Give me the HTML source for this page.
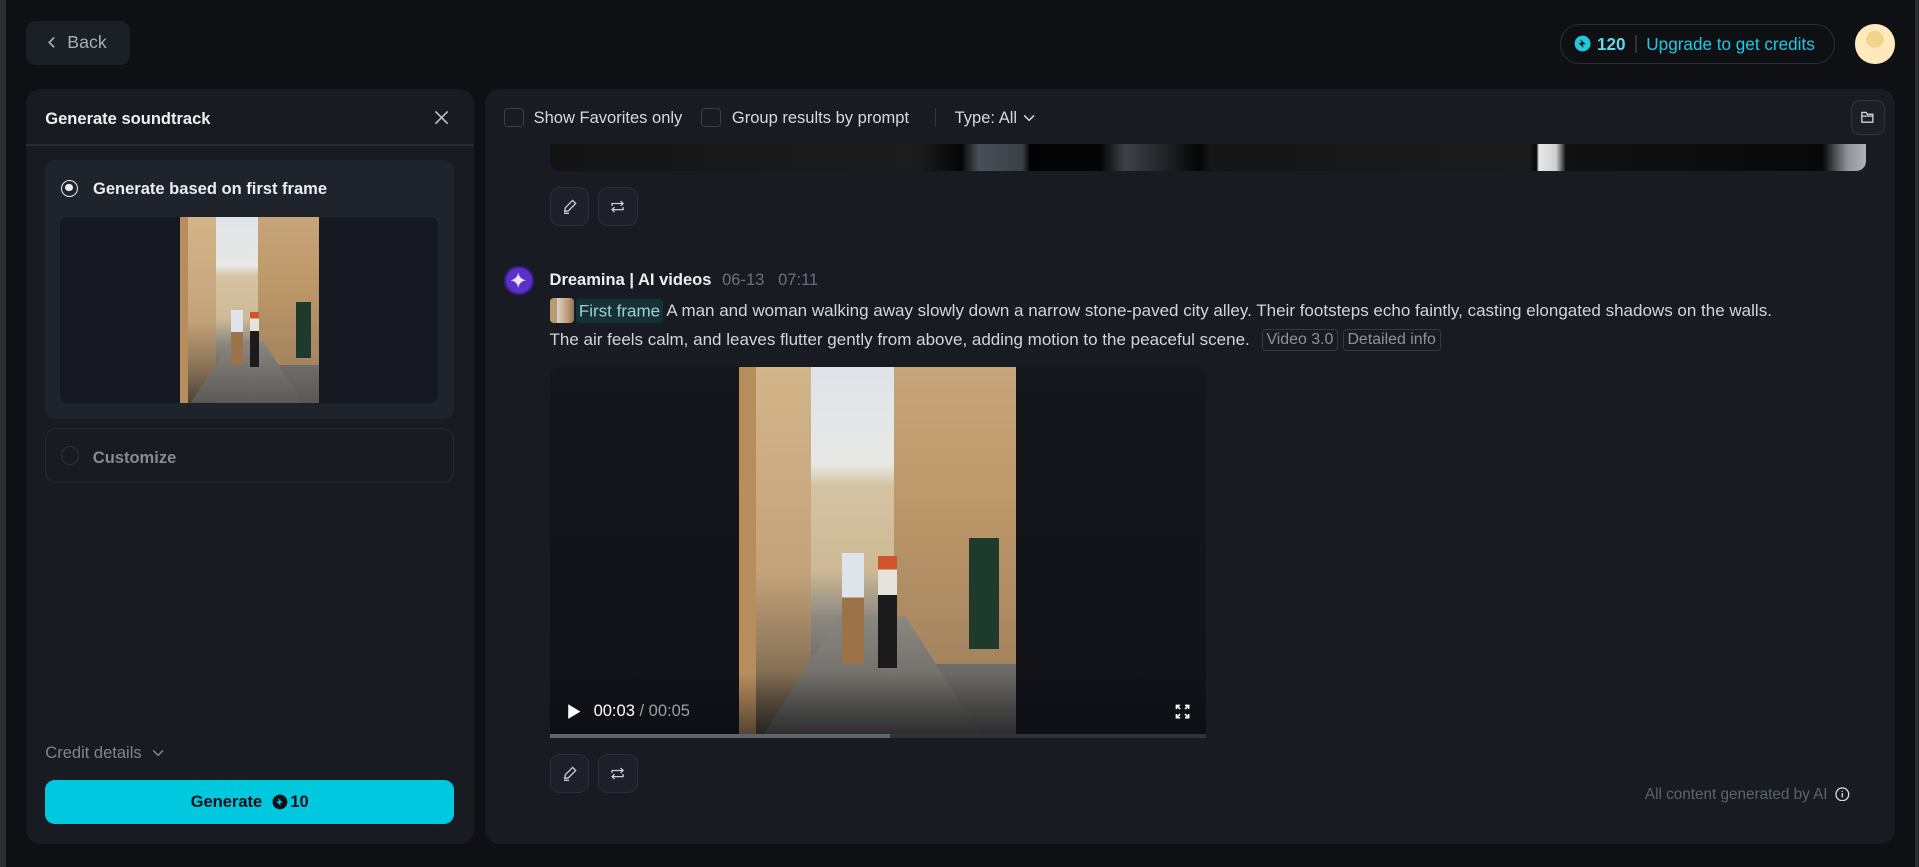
<!DOCTYPE html>
<html><head><meta charset="utf-8"><style>
*{box-sizing:border-box;margin:0;padding:0}
html,body{width:1919px;height:867px;overflow:hidden;background:#0f1013}
#root{zoom:1.2239;width:1568px;height:708px;position:relative;font-family:"Liberation Sans",sans-serif;background:#0f1013}
.abs{position:absolute}
.edgeL{left:0;top:0;width:5px;height:708px;background:#2e2e31}
.edgeR{right:0;top:0;width:3px;height:708px;background:#2e2e31}
.panel{background:#181b22;border-radius:12px}
.btn{position:absolute;width:32px;height:32px;border-radius:8px;background:#1d2028;border:1px solid #2a2e36;display:flex;align-items:center;justify-content:center}
.photo{position:absolute;overflow:hidden;background:linear-gradient(180deg,#dfe4e8 0%,#e8e9e6 26%,#d4c3a2 32%,#cdb995 55%,#8b8780 68%,#6f6c69 80%,#5a5855 100%)}
.photo .wl{position:absolute;left:0;top:0;width:26%;height:100%;background:linear-gradient(180deg,#d3b58a,#c4a37a 55%,#8a7458 80%,#4e4236)}
.photo .wl2{position:absolute;left:0;top:0;width:6%;height:100%;background:#b88d5e}
.photo .wr{position:absolute;right:0;top:0;width:44%;height:80%;background:linear-gradient(180deg,#c8a57a,#bb9668 50%,#a48460)}
.photo .road{position:absolute;left:8%;bottom:0;width:80%;height:33%;background:linear-gradient(180deg,#8b8780,#5c5a57);clip-path:polygon(35% 0,65% 0,100% 100%,0 100%)}
.photo .m{position:absolute;left:37%;top:50%;width:8%;height:30%;background:linear-gradient(180deg,#dfe3ea 40%,#9c7248 40%)}
.photo .w{position:absolute;left:50%;top:51%;width:7%;height:30%;background:linear-gradient(180deg,#d2542a 12%,#e6e2dc 12%,#e6e2dc 35%,#1b1b1b 35%)}
.photo .door{position:absolute;right:6%;top:46%;width:11%;height:30%;background:#1e3a2c}
</style></head><body><div id="root">
<div class="abs edgeL"></div><div class="abs edgeR"></div>

<div class="abs" style="left:21px;top:17px;width:85px;height:36px;border-radius:8px;background:#1b1f26;color:#a9aeb6;font-size:14.5px;display:flex;align-items:center;padding-left:16px">
<svg width="12" height="12" viewBox="0 0 12 12" style="margin-right:6px"><path d="M7.5 2L3.5 6l4 4" stroke="#a9aeb6" stroke-width="1.4" fill="none"/></svg>Back</div>

<div class="abs" style="left:1275px;top:20px;width:224px;height:32px;border:1px solid #2a2d33;border-radius:16px;display:flex;align-items:center;padding-left:10px;font-size:14px">
<svg width="14" height="14" viewBox="0 0 14 14"><circle cx="7" cy="7" r="6.5" fill="#22c7e0"/><path d="M5 3.5l4.5 4-2.5.3.8 2.7-4-3.8 2.3-.3z" fill="#0f1013"/></svg>
<span style="color:#5fd8ea;font-weight:bold;margin-left:5px">120</span>
<span style="width:1px;height:14px;background:#2e3238;margin:0 8px"></span>
<span style="color:#1ecbe6">Upgrade to get credits</span></div>
<div class="abs" style="left:1516px;top:20px;width:32px;height:32px;border-radius:50%;background:radial-gradient(circle at 50% 38%,#f3d48e 0 26%,#fde9bc 28%)"></div>

<!-- left panel -->
<div class="abs panel" style="left:21px;top:73px;width:366px;height:617px">
 <div class="abs" style="left:16px;top:16px;color:#eef0f3;font-size:13.5px;font-weight:bold">Generate soundtrack</div>
 <svg class="abs" style="left:333px;top:16px" width="14" height="14" viewBox="0 0 14 14"><path d="M2 2l10 10M12 2L2 12" stroke="#b8bcc4" stroke-width="1.4"/></svg>
 <div class="abs" style="left:0;top:45px;width:366px;height:1px;background:#272b33"></div>
 <div class="abs" style="left:16px;top:58px;width:334px;height:211px;border-radius:9px;background:#1f232b">
  <div class="abs" style="left:13px;top:16px;width:14px;height:14px;border-radius:50%;border:1.4px solid #e8eaee"><div style="width:6px;height:6px;border-radius:50%;background:#e8eaee;margin:2.6px"></div></div>
  <div class="abs" style="left:39px;top:15px;color:#eceef1;font-size:13.5px;font-weight:bold">Generate based on first frame</div>
  <div class="abs" style="left:12px;top:46px;width:309px;height:152px;border-radius:6px;background:#151820">
   <div class="photo" style="left:98px;top:0;width:114px;height:152px"><div class="wl"></div><div class="wl2"></div><div class="wr"></div><div class="road"></div><div class="door"></div><div class="m"></div><div class="w"></div></div>
  </div>
 </div>
 <div class="abs" style="left:16px;top:277px;width:334px;height:45px;border-radius:9px;border:1px solid #262a31">
  <div class="abs" style="left:12px;top:14px;width:15px;height:15px;border-radius:50%;border:1.4px solid #2e323a"></div>
  <div class="abs" style="left:38px;top:15px;color:#858a93;font-size:13.5px;font-weight:bold">Customize</div>
 </div>
 <div class="abs" style="left:16px;top:534px;color:#7f858e;font-size:13.5px">Credit details <svg width="10" height="8" viewBox="0 0 10 8" style="margin-left:5px"><path d="M1 2l4 4 4-4" stroke="#7f858e" stroke-width="1.2" fill="none"/></svg></div>
 <div class="abs" style="left:16px;top:564px;width:334px;height:36px;border-radius:8px;background:#00c8df;display:flex;align-items:center;justify-content:center;color:#0d1117;font-size:13.5px;font-weight:bold">Generate
  <svg width="13" height="13" viewBox="0 0 14 14" style="margin:0 2px 0 8px"><circle cx="7" cy="7" r="6.5" fill="#0d1117"/><path d="M5 3.5l4.5 4-2.5.3.8 2.7-4-3.8 2.3-.3z" fill="#00c8df"/></svg>10</div>
</div>

<!-- right panel -->
<div class="abs panel" style="left:396px;top:73px;width:1152px;height:617px;overflow:hidden">
 <div class="abs" style="left:16px;top:15px;width:16px;height:16px;border:1px solid #3a3e46;border-radius:3px"></div>
 <div class="abs" style="left:40px;top:15px;color:#d6d9de;font-size:13.5px">Show Favorites only</div>
 <div class="abs" style="left:177px;top:15px;width:16px;height:16px;border:1px solid #3a3e46;border-radius:3px"></div>
 <div class="abs" style="left:202px;top:15px;color:#d6d9de;font-size:13.5px">Group results by prompt</div>
 <div class="abs" style="left:368px;top:15px;width:1px;height:16px;background:#30343b"></div>
 <div class="abs" style="left:384px;top:15px;color:#d6d9de;font-size:13.5px">Type: All <svg width="10" height="8" viewBox="0 0 10 8" style="margin-left:1px"><path d="M1 2l4 4 4-4" stroke="#d6d9de" stroke-width="1.2" fill="none"/></svg></div>
 <div class="abs" style="left:1116px;top:9px;width:28px;height:28px;border-radius:7px;border:1px solid #30343c;background:#1c1f26;display:flex;align-items:center;justify-content:center"><svg width="12" height="12" viewBox="0 0 12 12"><path d="M1.5 2h3.5l1 1.5h4.5v6.5h-9z M1.5 5h9" stroke="#d0d3d8" stroke-width="1.1" fill="none"/></svg></div>
 <div class="abs" style="left:53px;top:45px;width:1076px;height:22px;border-radius:0 0 8px 8px;background:linear-gradient(90deg,#141414 0,#1c1c1c 300px,#050505 336px,#4a4f57 350px,#3b3f46 386px,#030303 392px,#050505 450px,#3e4248 470px,#1e2022 505px,#050505 530px,#151515 540px,#1b1b1b 800px,#060606 806px,#e8e8e8 808px,#cfcfcf 822px,#111 830px,#080808 1040px,#8e939a 1060px,#b0b4ba 1076px)"></div>
 <div class="btn" style="left:53px;top:80px"><svg width="14" height="14" viewBox="0 0 14 14"><path d="M3 11l.5-3 6-6 2.5 2.5-6 6zM2.5 12.5h4" stroke="#c9ccd2" stroke-width="1.1" fill="none"/></svg></div>
 <div class="btn" style="left:93px;top:80px"><svg width="14" height="14" viewBox="0 0 14 14"><path d="M2.5 6.5v-2h9M9.5 2.5l2 2-2 2M11.5 7.5v2h-9M4.5 11.5l-2-2 2-2" stroke="#c9ccd2" stroke-width="1.1" fill="none"/></svg></div>

 <div class="abs" style="left:16px;top:144px;width:24px;height:24px;border-radius:50%;background:#5a30c8;border:2px solid #3a1f86"><svg width="20" height="20" viewBox="0 0 20 20"><path d="M10 3.5Q10.8 9.2 16.5 10Q10.8 10.8 10 16.5Q9.2 10.8 3.5 10Q9.2 9.2 10 3.5z" fill="#e9e2ff"/></svg></div>
 <div class="abs" style="left:53px;top:148px;font-size:13.5px"><b style="color:#eceef1">Dreamina | AI videos</b> <span style="color:#6a707a;margin-left:5px">06-13&nbsp;&nbsp;&nbsp;07:11</span></div>
 <div class="abs" style="left:53px;top:170px;width:1100px;font-size:13.9px;color:#d2d5da;line-height:23px">
  <span style="display:inline-block;width:20px;height:20px;border-radius:3px;vertical-align:-5px;background:linear-gradient(90deg,#b89a72 30%,#d8d3c8 30%,#c5a07a 70%,#8a7560)"></span><span style="background:#163136;color:#9fd0d6;padding:2px 2px;border-radius:3px;margin-left:2px">First frame</span> A man and woman walking away slowly down a narrow stone-paved city alley. Their footsteps echo faintly, casting elongated shadows on the walls.<br>
  The air feels calm, and leaves flutter gently from above, adding motion to the peaceful scene. <span style="border:1px solid #353941;border-radius:3px;color:#8d929a;padding:1px 3px;margin-left:6px;font-size:13px">Video 3.0</span> <span style="border:1px solid #353941;border-radius:3px;color:#8d929a;padding:1px 3px;font-size:13px">Detailed info</span>
 </div>
 <div class="abs" style="left:53px;top:227px;width:536px;height:303px;border-radius:8px 8px 0 0;background:linear-gradient(180deg,#15171d,#101217);overflow:hidden">
  <div class="photo" style="left:155px;top:0;width:226px;height:303px"><div class="wl"></div><div class="wl2"></div><div class="wr"></div><div class="road"></div><div class="door"></div><div class="m"></div><div class="w"></div></div>
  <div class="abs" style="left:0;top:250px;width:536px;height:53px;background:linear-gradient(180deg,rgba(10,12,16,0),rgba(10,12,16,.6))"></div>
  <svg class="abs" style="left:14px;top:274px" width="12" height="14" viewBox="0 0 12 14"><path d="M1 1l10 6-10 6z" fill="#fff"/></svg>
  <div class="abs" style="left:36px;top:273px;font-size:13.5px;color:#fff">00:03 <span style="color:#9aa0a8">/ 00:05</span></div>
  <svg class="abs" style="left:510px;top:274px" width="14" height="14" viewBox="0 0 14 14"><path d="M2 5V2h3M9 2h3v3M12 9v3H9M5 12H2V9M2 2l3 3M12 2L9 5M12 12L9 9M2 12l3-3" stroke="#fff" stroke-width="1.3" fill="none"/></svg>
  <div class="abs" style="left:0;top:300px;width:536px;height:3px;background:#2f333a"><div style="width:278px;height:3px;background:#5d6670"></div></div>
 </div>
 <div class="btn" style="left:53px;top:543px"><svg width="14" height="14" viewBox="0 0 14 14"><path d="M3 11l.5-3 6-6 2.5 2.5-6 6zM2.5 12.5h4" stroke="#c9ccd2" stroke-width="1.1" fill="none"/></svg></div>
 <div class="btn" style="left:93px;top:543px"><svg width="14" height="14" viewBox="0 0 14 14"><path d="M2.5 6.5v-2h9M9.5 2.5l2 2-2 2M11.5 7.5v2h-9M4.5 11.5l-2-2 2-2" stroke="#c9ccd2" stroke-width="1.1" fill="none"/></svg></div>
 <div class="abs" style="left:948px;top:569px;font-size:12.5px;color:#5d636c">All content generated by AI <svg width="12" height="12" viewBox="0 0 12 12" style="vertical-align:-2px;margin-left:3px"><circle cx="6" cy="6" r="5.2" stroke="#d5d8dc" stroke-width="1.1" fill="none"/><path d="M6 5v3.5M6 3.2v.8" stroke="#d5d8dc" stroke-width="1.2"/></svg></div>
</div>
</div></body></html>
